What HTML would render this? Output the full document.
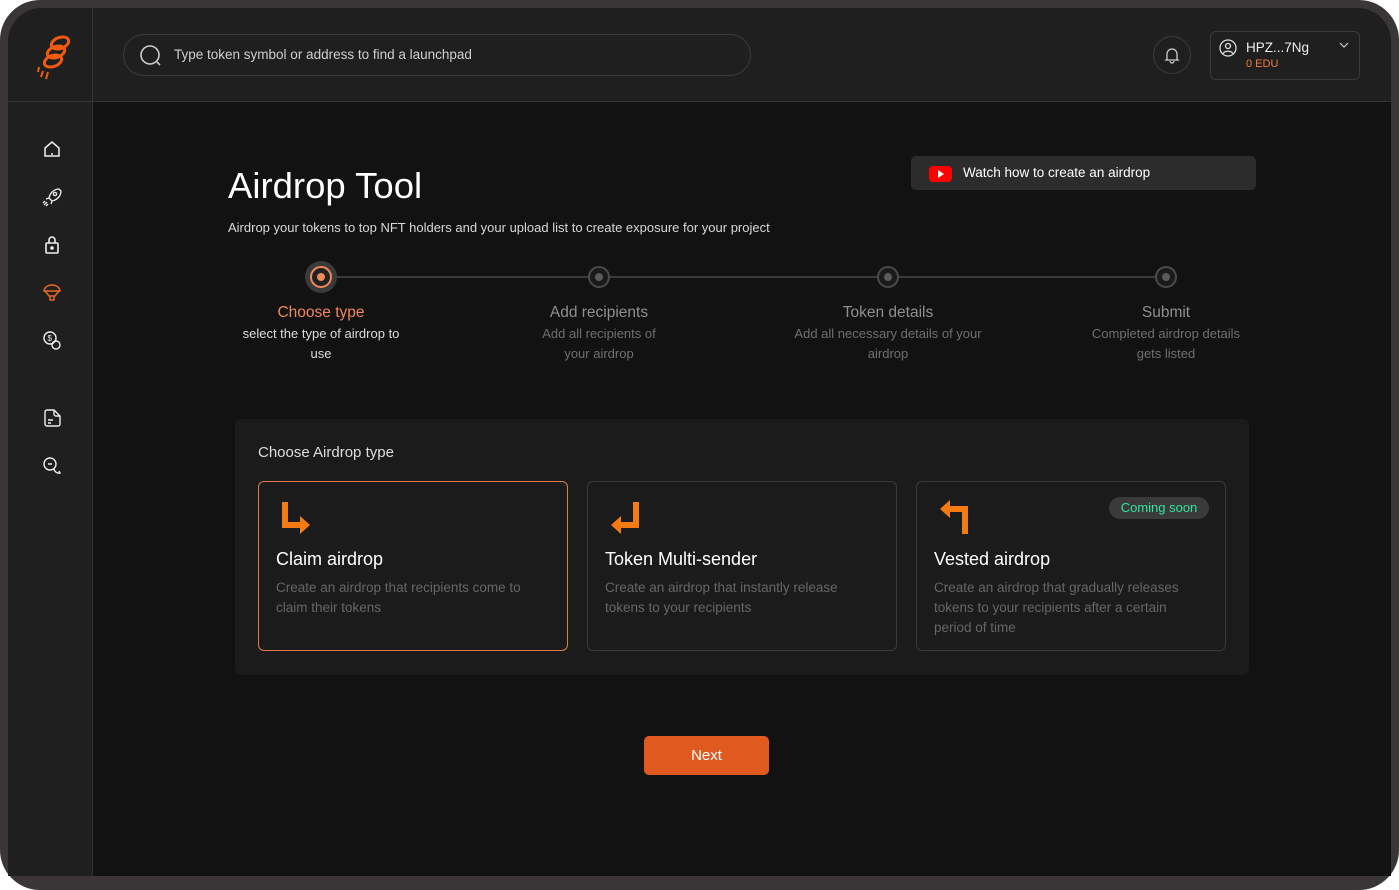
<!DOCTYPE html>
<html><head><meta charset="utf-8"><style>
*{box-sizing:border-box;margin:0;padding:0}
body{width:1399px;height:890px;background:#fff;font-family:"Liberation Sans",sans-serif;overflow:hidden;position:relative}
.frame{position:absolute;left:0;top:0;width:1399px;height:890px;background:#3a3637;border-radius:40px}
.inner{position:absolute;left:8px;top:8px;width:1383px;height:868px;border-radius:34px 34px 0 0;overflow:hidden;background:#121212}
.side{position:absolute;left:0;top:0;width:85px;height:868px;background:#1f1f1f;border-right:1px solid #333}
.head{position:absolute;left:85px;top:0;right:0;height:94px;background:#1f1f1f;border-bottom:1px solid #333}
.sidetop{position:absolute;left:0;top:93px;width:85px;height:1px;background:#333}
.search{position:absolute;left:115px;top:26px;width:628px;height:42px;border:1px solid #3a3a3a;border-radius:21px;color:#cfcfcf;font-size:13.5px;line-height:40px;padding-left:50px}
.t{position:absolute;color:#fff}
.ico{position:absolute;left:34px}
.step{position:absolute;width:220px;text-align:center;font-size:13px;line-height:20px;color:#6f6f6f}
.step b{display:block;font-weight:normal;font-size:15.5px;color:#8f8f8f;margin-bottom:1px}
.dot{position:absolute;top:258px;width:22px;height:22px;border-radius:50%;border:2px solid #4a4a4a;background:#1a1a1a}
.dot:after{content:"";position:absolute;left:5px;top:5px;width:8px;height:8px;border-radius:50%;background:#5a5a5a}
.card{position:absolute;top:473px;width:310px;height:170px;border:1px solid #3a3a3a;border-radius:6px;background:#1b1b1b}
.card h3{position:absolute;left:17px;top:67px;font-weight:normal;font-size:18px;color:#fff}
.card p{position:absolute;left:17px;top:96px;width:270px;font-size:13.5px;line-height:20px;color:#666}
</style></head><body>
<div class="frame"></div>
<div class="inner">
<div class="side"></div><div class="head"></div><div class="sidetop"></div>
<svg style="position:absolute;left:28px;top:26px" width="40" height="46" viewBox="0 0 40 46" fill="none" stroke="#f25a0f" stroke-width="3"><ellipse cx="24" cy="9" rx="9" ry="5.5" transform="rotate(-20 24 9)"/><ellipse cx="20" cy="18" rx="9" ry="5.5" transform="rotate(-20 20 18)"/><ellipse cx="17" cy="27" rx="9" ry="5.5" transform="rotate(-20 17 27)"/><path d="M7 37 L5 43 M12 38 L10 45 M3 33 L2 38" stroke-width="2"/></svg>
<div class="search">Type token symbol or address to find a launchpad</div>
<svg style="position:absolute;left:131px;top:36px" width="24" height="24" viewBox="0 0 24 24" fill="none" stroke="#ccc" stroke-width="1.6"><circle cx="11" cy="11" r="9"/><path d="M18 18l3 3"/></svg>
<div style="position:absolute;left:1145px;top:28px;width:38px;height:38px;border:1px solid #3a3a3a;border-radius:50%"></div>
<svg style="position:absolute;left:1155px;top:38px" width="18" height="18" viewBox="0 0 18 18" fill="none" stroke="#ccc" stroke-width="1.3"><path d="M4 13V8a5 5 0 0110 0v5l1 1H3z M7 15a2 2 0 004 0"/></svg>
<div style="position:absolute;left:1202px;top:23px;width:150px;height:49px;border:1px solid #3a3a3a;border-radius:6px"></div>
<svg style="position:absolute;left:1211px;top:31px" width="18" height="18" viewBox="0 0 18 18" fill="none" stroke="#ddd" stroke-width="1.3"><circle cx="9" cy="9" r="8"/><circle cx="9" cy="7" r="2.5"/><path d="M4 14.5c2-3 8-3 10 0"/></svg>
<div class="t" style="left:1238px;top:32px;font-size:13.5px;color:#eee">HPZ...7Ng</div>
<div class="t" style="left:1238px;top:50px;font-size:11px;color:#f07a3a">0 EDU</div>
<svg style="position:absolute;left:1331px;top:34px" width="10" height="6" viewBox="0 0 10 6" fill="none" stroke="#ccc" stroke-width="1.2"><path d="M1 1l4 4 4-4"/></svg>
<svg class="ico" style="top:131px" width="20" height="20" viewBox="0 0 20 20" fill="none" stroke="#eee" stroke-width="1.5"><path d="M3 9l7-6 7 6v8H3z M10 14v2"/></svg>
<svg class="ico" style="top:179px" width="20" height="20" viewBox="0 0 20 20" fill="none" stroke="#eee" stroke-width="1.3"><path d="M17 2c-5 0-9 4-10 9l3 3c5-1 9-5 9-10z M7 11l-3 1 M10 14l-1 3"/><circle cx="13" cy="7" r="1.6"/><path d="M2 18l3-3 M4 19l2-2 M1 16l2-2"/></svg>
<svg class="ico" style="top:226px" width="20" height="20" viewBox="0 0 20 20" fill="none" stroke="#eee" stroke-width="1.6"><rect x="4" y="9" width="12" height="10" rx="1"/><path d="M7 9V6a3 3 0 016 0v3"/><circle cx="10" cy="14" r="1" fill="#eee"/></svg>
<svg class="ico" style="top:274px" width="20" height="20" viewBox="0 0 20 20" fill="none" stroke="#f06a20" stroke-width="1.4"><path d="M2 9a8 6 0 0116 0z M3 9l5 6 M17 9l-5 6"/><rect x="8" y="14" width="4" height="4"/></svg>
<svg class="ico" style="top:322px" width="20" height="20" viewBox="0 0 20 20" fill="none" stroke="#eee" stroke-width="1.4"><circle cx="8" cy="8" r="6"/><circle cx="14" cy="15" r="4"/><text x="5.5" y="11" font-size="8" fill="#eee" stroke="none" font-family="Liberation Sans">$</text></svg>
<svg class="ico" style="top:400px" width="20" height="20" viewBox="0 0 20 20" fill="none" stroke="#eee" stroke-width="1.4"><path d="M3 4a2 2 0 012-2h7l6 6v8a2 2 0 01-2 2H5a2 2 0 01-2-2z M12 2v4a2 2 0 002 2h4 M6 12h5 M6 15h3"/></svg>
<svg class="ico" style="top:448px" width="20" height="20" viewBox="0 0 20 20" fill="none" stroke="#eee" stroke-width="1.4"><circle cx="8" cy="8" r="6"/><path d="M6 8h4 M12 13a5 5 0 006 4l-1-2"/></svg>
<div class="t" style="left:220px;top:157px;font-size:36.5px">Airdrop Tool</div>
<div class="t" style="left:220px;top:212px;font-size:13px;color:#d8d8d8">Airdrop your tokens to top NFT holders and your upload list to create exposure for your project</div>
<div style="position:absolute;left:903px;top:148px;width:345px;height:34px;background:#2c2c2c;border-radius:5px"></div>
<div style="position:absolute;left:921px;top:158px;width:23px;height:16px;background:#f00;border-radius:4px"></div>
<div style="position:absolute;left:930px;top:162px;border-left:6px solid #fff;border-top:4px solid transparent;border-bottom:4px solid transparent"></div>
<div class="t" style="left:955px;top:157px;font-size:13.5px">Watch how to create an airdrop</div>
<div style="position:absolute;left:313px;top:268px;width:845px;height:2px;background:#3a3a3a"></div>
<div style="position:absolute;left:297px;top:253px;width:32px;height:32px;border-radius:50%;background:#3a3a3a"></div>
<div style="position:absolute;left:302px;top:258px;width:22px;height:22px;border-radius:50%;border:2px solid #f08a5a;background:#222"></div>
<div style="position:absolute;left:309px;top:265px;width:8px;height:8px;border-radius:50%;background:#f08a5a"></div>
<div class="dot" style="left:580px"></div><div class="dot" style="left:869px"></div><div class="dot" style="left:1147px"></div>
<div class="step" style="left:213px;top:295px;width:200px;padding:0 10px;color:#ddd"><b style="color:#f0875a">Choose type</b>select the type of airdrop to use</div>
<div class="step" style="left:481px;top:295px;padding:0 45px"><b>Add recipients</b>Add all recipients of your airdrop</div>
<div class="step" style="left:770px;top:295px;padding:0 10px"><b>Token details</b>Add all necessary details of your airdrop</div>
<div class="step" style="left:1048px;top:295px;padding:0 25px"><b>Submit</b>Completed airdrop details gets listed</div>
<div style="position:absolute;left:227px;top:411px;width:1014px;height:256px;background:#1b1b1b;border-radius:6px"></div>
<div class="t" style="left:250px;top:436px;font-size:15px;color:#ddd">Choose Airdrop type</div>
<div class="card" style="left:250px;border-color:#e07a4a"><svg style="position:absolute;left:20px;top:20px" width="34" height="32" viewBox="0 0 34 32"><path d="M3 0h6v20h12v-6l10 9-10 9v-6H3z" fill="#f57a10"/></svg><h3>Claim airdrop</h3><p>Create an airdrop that recipients come to claim their tokens</p></div>
<div class="card" style="left:579px"><svg style="position:absolute;left:20px;top:20px" width="34" height="32" viewBox="0 0 34 32"><path d="M31 0h-6v20H13v-6L3 23l10 9v-6h18z" fill="#f57a10"/></svg><h3>Token Multi-sender</h3><p>Create an airdrop that instantly release tokens to your recipients</p></div>
<div class="card" style="left:908px"><svg style="position:absolute;left:20px;top:18px" width="34" height="34" viewBox="0 0 34 34"><path d="M31 34h-6V12H13v6L3 9l10-9v6h18z" fill="#f57a10"/></svg>
<div style="position:absolute;left:192px;top:15px;width:100px;height:22px;background:#3a3a3a;border-radius:11px;color:#2ee59d;font-size:13px;line-height:22px;text-align:center">Coming soon</div>
<h3>Vested airdrop</h3><p>Create an airdrop that gradually releases tokens to your recipients after a certain period of time</p></div>
<div style="position:absolute;left:636px;top:728px;width:125px;height:39px;background:#e05a20;border-radius:5px;color:#fff;font-size:15px;line-height:39px;text-align:center">Next</div>
</div>
</body></html>
